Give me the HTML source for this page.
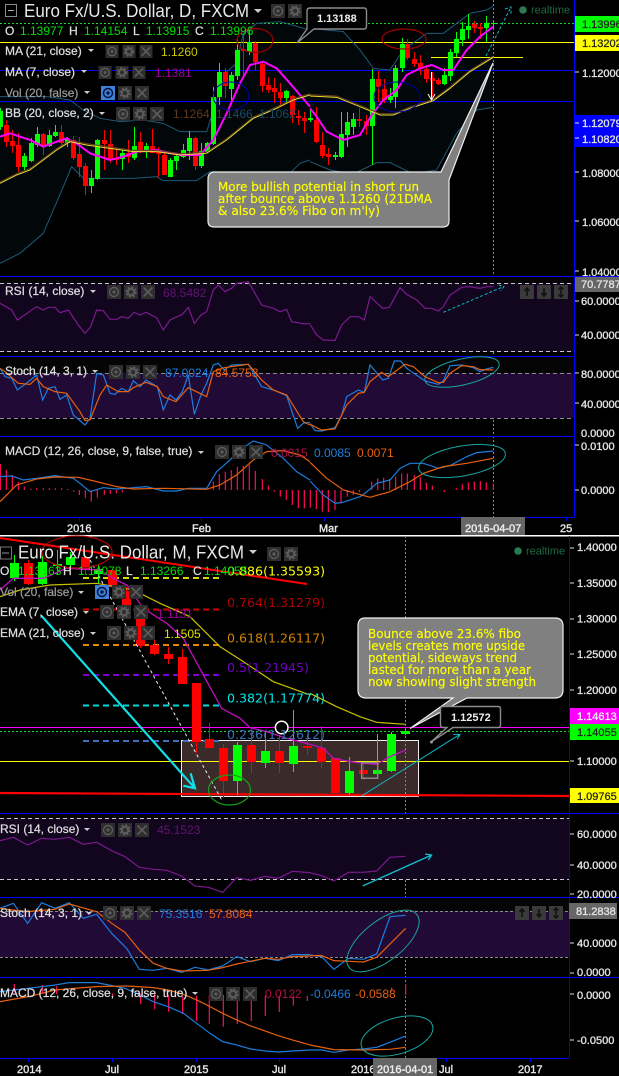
<!DOCTYPE html>
<html><head><meta charset="utf-8"><style>
html,body{margin:0;padding:0;background:#000;width:619px;height:1076px;overflow:hidden}
svg{display:block}
svg *{vector-effect:non-scaling-stroke}
text{font-family:"Liberation Sans",sans-serif;font-size:12px;fill:#ddd}
.t{font-size:18px;fill:#e8e8e8}
.ax{font-size:11px;fill:#e2e2e2;stroke:#e2e2e2;stroke-width:.35px}
.axd{font-size:11px;fill:#222;stroke:#222;stroke-width:.25px}
.tm{font-size:11px;fill:#e6e6e6;stroke:#e6e6e6;stroke-width:.4px}
.g{fill:#00e000}
.lb{fill:#dedede;font-size:12px;stroke:#dedede;stroke-width:.25px}
.c{font-family:"DejaVu Sans",sans-serif;fill:#ff0;font-size:12px;stroke:#ff0;stroke-width:.15px}
.f{font-family:"DejaVu Sans",sans-serif;font-size:12.5px}
.l{fill:none;stroke-width:1}
</style></head><body>
<svg width="619" height="1076" viewBox="0 0 619 1076" xmlns="http://www.w3.org/2000/svg">
<defs>
<symbol id="e" viewBox="0 0 14 14" overflow="visible"><rect width="14" height="14" fill="#2e2e2e"/><circle cx="7" cy="7" r="4.5" fill="none" stroke="#5c5c5c" stroke-width="1.4"/><circle cx="7" cy="7" r="1.6" fill="#5c5c5c"/></symbol>
<symbol id="b" viewBox="0 0 14 14" overflow="visible"><rect width="14" height="14" fill="#3f7fd8"/><circle cx="7" cy="7" r="4.5" fill="none" stroke="#013" stroke-width="1.4"/><circle cx="7" cy="7" r="1.6" fill="#013"/></symbol>
<symbol id="s" viewBox="0 0 14 14" overflow="visible"><rect width="14" height="14" fill="#2e2e2e"/><circle cx="7" cy="7" r="3.2" fill="none" stroke="#5c5c5c" stroke-width="2"/><circle cx="7" cy="7" r="4.8" fill="none" stroke="#5c5c5c" stroke-width="1.8" stroke-dasharray="2 1.8"/></symbol>
<symbol id="x" viewBox="0 0 14 14" overflow="visible"><rect width="14" height="14" fill="#2e2e2e"/><path d="M2.5 2.5L11.5 11.5M11.5 2.5L2.5 11.5" stroke="#5c5c5c" stroke-width="1.6"/></symbol>
<symbol id="u" viewBox="0 0 14 14" overflow="visible"><rect width="14" height="14" fill="#3a3a3a"/><path d="M7 3V11M4.5 6L7 3L9.5 6" stroke="#111" stroke-width="1.6" fill="none"/></symbol>
<symbol id="d" viewBox="0 0 14 14" overflow="visible"><rect width="14" height="14" fill="#3a3a3a"/><path d="M7 3V11M4.5 8L7 11L9.5 8" stroke="#111" stroke-width="1.6" fill="none"/></symbol>
<symbol id="ud" viewBox="0 0 14 14" overflow="visible"><rect width="14" height="14" fill="#3a3a3a"/><path d="M7 2V12M4.5 4.5L7 2L9.5 4.5M4.5 9.5L7 12L9.5 9.5" stroke="#111" stroke-width="1.5" fill="none"/></symbol>
</defs>
<rect width="619" height="1076" fill="#000"/>

<!-- ============ TOP CHART ============ -->
<g transform="scale(.3333)"><polygon fill="#02070a" points="0,290 140,290 210,300 250,330 300,355 360,365 430,360 490,370 540,395 620,395 650,300 680,215 710,190 730,100 770,70 840,65 930,90 930,480 900,490 850,540 780,560 700,520 630,515 590,542 490,542 470,530 400,535 300,535 250,535 215,500 190,560 130,700 60,760 0,790"/></g>
<g transform="translate(310,0) scale(.3333)"><polygon fill="#02070a" points="0,85 100,95 150,150 190,205 240,210 280,150 350,100 400,100 480,40 530,30 550,18 550,322 500,330 440,400 380,510 310,522 240,488 200,488 130,522 60,510 0,485"/></g>
<path d="M0 23.5H574" stroke="#1fd81f" stroke-dasharray="2 2" fill="none"/>
<path d="M0 42.5H574" stroke="#ff0" fill="none"/>
<path d="M0 70.5H574M0 101.5H574" stroke="#00f" fill="none"/>
<path d="M431 57.5H523" stroke="#ff0" fill="none"/>
<g transform="scale(.3333)"><polyline class="l" stroke="#1c5a78" points="0,290 140,290 210,300 250,330 300,355 360,365 430,360 490,370 540,395 620,395 650,300 680,215 710,190 730,100 770,70 840,65 930,90"/><polyline class="l" stroke="#1c5a78" points="0,790 60,760 130,700 190,560 215,500 250,535 300,535 400,535 470,530 490,542 590,542 630,515 700,520 780,560 850,540 900,490 930,480"/></g>
<g transform="translate(310,0) scale(.3333)"><polyline class="l" stroke="#1c5a78" points="0,85 100,95 150,150 190,205 240,210 280,150 350,100 400,100 480,40 530,30 550,18"/><polyline class="l" stroke="#1c5a78" points="0,485 60,510 130,522 200,488 240,488 310,522 380,510 440,400 500,330 550,322"/></g>
<path fill="none" stroke="#0f0" stroke-width="1" d="M0.5 108V130M24.5 153V170M31.5 138V162M37.5 127V147M49.5 130V147M55.5 125V137M67.5 137V147M91.5 170V193M97.5 139V180M122.5 150V170M134.5 127V160M146.5 143V158M170.5 158V177M176.5 153V170M183.5 144V158M189.5 131V160M201.5 143V168M207.5 142V153M213.5 87V145M219.5 63V105M231.5 72V102M237.5 38V80M249.5 29V55M286.5 90V103M310.5 110V122M335.5 152V160M341.5 112V158M347.5 112V147M353.5 113V135M372.5 69V165M390.5 88V103M395.5 65V108M402.5 38V72M444.5 68V85M450.5 49V81M456.5 32V57M462.5 22V46M468.5 14V39M486.5 16V42M493.5 20V28"/>
<path fill="none" stroke="#0f0" stroke-width="5" d="M0.5 111V127M24.5 156V167M31.5 143V161M37.5 134V145M49.5 135V146M55.5 132V136M67.5 139V143M91.5 178V186M97.5 140V179M122.5 153V159M134.5 146V158M146.5 146V151M170.5 160V177M176.5 156V161M183.5 150V157M189.5 138V151M201.5 151V166M207.5 143V152M213.5 97V144M219.5 72V97M231.5 75V89M237.5 50V76M249.5 42V52M286.5 91V98M310.5 118V120M335.5 155V157M341.5 134V157M347.5 122V135M353.5 119V127M372.5 79V126M390.5 96V100M395.5 68V97M402.5 44V68M444.5 75V84M450.5 52V76M456.5 39V53M462.5 29V40M468.5 26V30M486.5 23V28M493.5 23V24"/>
<path fill="none" stroke="#f00" stroke-width="1" d="M6.5 120V147M12.5 130V153M18.5 133V172M43.5 133V155M61.5 125V147M73.5 136V160M79.5 137V177M85.5 163V195M104.5 130V170M110.5 130V163M116.5 148V165M128.5 140V163M140.5 132V153M152.5 129V153M158.5 147V177M164.5 153V175M195.5 137V170M225.5 68V98M243.5 35V77M255.5 41V70M262.5 62V92M268.5 77V93M274.5 78V103M280.5 83V107M292.5 95V123M298.5 110V125M304.5 112V133M316.5 107V143M322.5 132V158M328.5 148V165M359.5 108V127M366.5 115V135M378.5 71V102M384.5 79V103M407.5 39V60M414.5 52V67M420.5 55V75M426.5 65V83M432.5 72V97M438.5 78V85M474.5 21V33M480.5 23V39"/>
<path fill="none" stroke="#f00" stroke-width="5" d="M6.5 125V142M12.5 141V146M18.5 145V167M43.5 134V146M61.5 132V143M73.5 140V158M79.5 154V167M85.5 166V186M104.5 140V144M110.5 144V159M116.5 158V160M128.5 153V157M140.5 142V151M152.5 146V153M158.5 152V154M164.5 155V175M195.5 138V166M225.5 72V86M243.5 49V51M255.5 43V62M262.5 64V86M268.5 85V90M274.5 88V92M280.5 92V98M292.5 96V115M298.5 116V118M304.5 118V121M316.5 120V142M322.5 145V156M328.5 154V157M359.5 119V121M366.5 121V126M378.5 79V87M384.5 89V100M407.5 44V58M414.5 59V64M420.5 63V69M426.5 69V79M432.5 78V81M438.5 80V84M474.5 24V28M480.5 27V29"/>
<g transform="scale(.3333)"><polyline class="l" stroke="#f0f" style="stroke-width:2" points="0,410 30,400 60,410 90,420 130,440 170,425 200,415 230,430 270,460 330,480 370,470 410,455 470,450 540,465 600,465 640,420 680,340 720,250 750,195 790,185 830,205 870,250 930,320"/><polyline class="l" stroke="#6a4020" style="stroke-width:1" points="0,546 50,521 90,506 130,476 170,446 210,421 260,431 330,441 400,451 470,451 540,461 620,456 680,416 760,351 830,321 880,296 930,281"/><polyline class="l" stroke="#e8e030" style="stroke-width:1" points="0,550 50,525 90,510 130,480 170,450 210,425 260,435 330,445 400,455 470,455 540,465 620,460 680,420 760,355 830,325 880,300 930,285"/></g>
<g transform="translate(310,0) scale(.3333)"><polyline class="l" stroke="#f0f" style="stroke-width:2" points="0,325 20,350 50,395 100,420 150,405 185,345 220,300 260,270 290,225 330,205 365,195 400,210 430,210 470,150 510,110 550,80"/><polyline class="l" stroke="#6a4020" style="stroke-width:1" points="0,284 80,288 150,316 210,341 250,341 300,321 370,298 420,261 480,211 550,168"/><polyline class="l" stroke="#e8e030" style="stroke-width:1" points="0,288 80,292 150,320 210,345 250,345 300,325 370,302 420,265 480,215 550,172"/></g>
<ellipse cx="255" cy="40.5" rx="18" ry="12" fill="none" stroke="#a00000" stroke-width="1.2"/>
<ellipse cx="404" cy="39" rx="22" ry="10" fill="none" stroke="#a00000" stroke-width="1.2"/>
<ellipse cx="231" cy="96" rx="18" ry="14" fill="none" stroke="#0000a8"/>
<ellipse cx="397" cy="97" rx="23" ry="15" fill="none" stroke="#0000a8"/>
<path d="M431.5 72V99M428 94L431.5 100L435 94" fill="none" stroke="#fff"/>
<path d="M486 56L510 9M505 9L511 7L511 14" fill="none" stroke="#12b6c4" stroke-dasharray="3 2"/>
<path d="M493.5 0V517" stroke="#888" stroke-dasharray="2 2" fill="none"/>
<path d="M215 172H441L493 63L449 180V221Q449 227 443 227H214Q208 227 208 221V179Q208 172 215 172Z" fill="#808080" stroke="#eee" stroke-width="1.2"/>
<text class="c" x="218" y="191" textLength="201" lengthAdjust="spacingAndGlyphs">More bullish potential in short run</text>
<text class="c" x="218" y="203" textLength="214" lengthAdjust="spacingAndGlyphs">after bounce above 1.1260 (21DMA</text>
<text class="c" x="218" y="215" textLength="162" lengthAdjust="spacingAndGlyphs">&amp; also 23.6% Fibo on m'ly)</text>
<path d="M310 8H364Q366.5 8 366.5 11V26Q366.5 29 364 29H314L297 43L307 29V11Q307 8 310 8Z" fill="#000" stroke="#8a8a8a" stroke-width="1.4"/>
<text x="317" y="22" style="font-size:11px;font-weight:bold;fill:#eee">1.13188</text>
<circle cx="523" cy="10" r="3.8" fill="#2a7a50"/>
<text x="531" y="13.5" style="font-size:11px;fill:#1d6a45">realtime</text>
<rect x="5.5" y="4.5" width="11" height="12" fill="none" stroke="#888"/><path d="M8 10.5H14" stroke="#aaa"/>
<text class="t" x="24" y="17" textLength="225" lengthAdjust="spacingAndGlyphs">Euro Fx/U.S. Dollar, D, FXCM</text>
<polygon points="254,9 262,9 258,13" fill="#ccc"/>
<use href="#e" x="271" y="4" width="14" height="14"/><use href="#s" x="288" y="4" width="14" height="14"/>
<text class="lb" x="5" y="35">O</text><text class="g" x="20" y="35">1.13977</text><text class="lb" x="69" y="35">H</text><text class="g" x="84" y="35">1.14154</text><text class="lb" x="133" y="35">L</text><text class="g" x="146" y="35">1.13915</text><text class="lb" x="195" y="35">C</text><text class="g" x="210" y="35">1.13996</text>
<text class="lb" x="5" y="55">MA (21, close)</text><polygon points="88,49 94,49 91,52" fill="#ccc"/>
<use href="#e" x="105" y="45" width="14" height="13"/><use href="#s" x="122" y="45" width="14" height="13"/><use href="#x" x="139" y="45" width="14" height="13"/>
<text x="161" y="56" style="fill:#cccc00">1.1260</text>
<text class="lb" x="5" y="76">MA (7, close)</text><polygon points="81,70 87,70 84,73" fill="#ccc"/>
<use href="#e" x="98" y="66" width="14" height="13"/><use href="#s" x="115" y="66" width="14" height="13"/><use href="#x" x="132" y="66" width="14" height="13"/>
<text x="155" y="77" style="fill:#9a009a">1.1381</text>
<text class="lb" x="5" y="97" style="fill:#999;stroke:#999">Vol (20, false)</text><polygon points="84,91 90,91 87,94" fill="#ccc"/>
<use href="#b" x="101" y="86" width="14" height="14"/><use href="#s" x="118" y="86" width="14" height="14"/><use href="#x" x="135" y="86" width="14" height="14"/>
<text class="lb" x="5" y="117">BB (20, close, 2)</text><polygon points="99,112 105,112 102,115" fill="#ccc"/>
<use href="#e" x="116" y="107" width="14" height="14"/><use href="#s" x="133" y="107" width="14" height="14"/><use href="#x" x="150" y="107" width="14" height="14"/>
<text x="173" y="118" style="fill:#5e3a1e">1.1264</text><text x="216" y="118" style="fill:#1c4a62">1.1466</text><text x="259" y="118" style="fill:#1c4a62">1.1062</text>

<path d="M574.5 0V517.5M0 276.5H619M0 356.5H574M0 436.5H574M0 517.5H574" stroke="#00f" fill="none"/>
<rect x="575" y="16" width="44" height="16" fill="#0f0"/><text class="axd" x="582" y="28">1.13996</text>
<rect x="575" y="35" width="44" height="16" fill="#ff0"/><text class="axd" x="582" y="47">1.13202</text>
<rect x="575" y="115" width="44" height="32" fill="#00f"/>
<text class="ax" x="582" y="127">1.12079</text><text class="ax" x="582" y="143">1.10820</text>
<path d="M575 72H579M575 123H579M575 138H579M575 172H579M575 221H579M575 271H579M575 301H579M575 335H579M575 373H579M575 403H579M575 445H579M575 490H579" stroke="#dde"/>
<text class="ax" x="582" y="77">1.12000</text><text class="ax" x="582" y="177">1.08000</text><text class="ax" x="582" y="226">1.06000</text><text class="ax" x="582" y="276">1.04000</text>

<rect x="0" y="283" width="574" height="69" fill="#12051e"/>
<rect x="0" y="277" width="574" height="6" fill="#050507"/>
<path d="M0 283.5H574M0 351.5H574" stroke="#c8c8c8" stroke-dasharray="4 3" fill="none"/>
<g transform="translate(0,275) scale(.3333)"><polyline class="l" stroke="#7a1a8e" style="stroke-width:1.2" points="0,85 35,105 52,135 110,95 130,105 145,97 165,97 180,113 205,105 235,150 255,175 272,155 290,105 310,107 330,133 350,133 365,125 385,130 402,112 420,120 438,112 470,128 490,165 510,135 547,118 565,97 583,145 603,120 620,110 640,45 655,30 675,50 695,40 710,25 745,20 785,90 820,100 840,110 860,103 875,140 915,147 930,145"/></g>
<g transform="translate(310,275) scale(.3333)"><polyline class="l" stroke="#7a1a8e" style="stroke-width:1.2" points="0,148 20,180 40,195 75,196 95,150 120,125 145,125 163,135 180,65 218,100 238,97 270,38 290,58 320,75 345,100 365,100 385,108 400,95 420,60 455,37 480,35 510,40 530,35 550,35"/><path d="M400 112L580 35M566 30L582 35L572 47" fill="none" stroke="#12b6c4" stroke-dasharray="3 2"/></g>
<text class="lb" x="5" y="295">RSI (14, close)</text><polygon points="90,290 96,290 93,293" fill="#ccc"/>
<use href="#e" x="107" y="285" width="14" height="14"/><use href="#s" x="124" y="285" width="14" height="14"/><use href="#x" x="141" y="285" width="14" height="14"/>
<text x="163" y="297" style="fill:#60146e">68.5482</text>
<use href="#u" x="520" y="285" width="14" height="14"/><use href="#d" x="537" y="285" width="14" height="14"/><use href="#ud" x="554" y="285" width="14" height="14"/>
<rect x="575" y="277" width="44" height="15" fill="#666"/><text class="ax" x="581" y="288">70.7787</text>
<text class="ax" x="581" y="305">60.0000</text><text class="ax" x="581" y="339">40.0000</text>

<rect x="0" y="373" width="574" height="45" fill="#210a36"/>
<rect x="0" y="357" width="574" height="16" fill="#050505"/>
<path d="M0 373.5H574M0 418.5H574" stroke="#8a8a8a" stroke-dasharray="4 3" fill="none"/>
<g transform="translate(0,275) scale(.3333)"><polyline class="l" stroke="#1a7ee0" style="stroke-width:1.2" points="0,280 15,305 35,310 52,345 75,328 110,300 128,375 145,340 165,335 180,373 200,360 220,420 255,450 270,430 290,295 310,300 330,355 345,358 365,340 385,350 400,317 420,335 438,315 472,335 490,405 510,360 528,375 547,350 565,300 583,418 603,360 620,325 640,270 655,265 672,285 695,270 745,268 785,335 820,345 860,362 893,460 910,445 930,442"/><polyline class="l" stroke="#e8600c" style="stroke-width:1.2" points="0,280 15,290 55,325 90,328 110,310 130,335 165,350 200,355 240,410 255,437 270,435 300,360 320,330 355,350 385,350 400,338 438,322 472,335 490,365 528,380 565,338 620,365 640,290 672,278 745,268 785,315 820,345 860,360 910,440 930,450"/></g>
<g transform="translate(310,275) scale(.3333)"><polyline class="l" stroke="#1a7ee0" style="stroke-width:1.2" points="0,445 15,467 35,468 75,458 95,420 110,365 145,345 163,352 180,270 218,315 235,310 253,258 272,258 290,280 345,318 385,328 400,318 420,272 455,270 490,278 510,290 530,282 550,277"/><polyline class="l" stroke="#e8600c" style="stroke-width:1.2" points="0,448 35,465 75,462 110,390 145,355 163,352 180,320 215,292 235,305 285,268 310,275 345,305 385,323 400,322 420,295 455,272 490,275 510,284 550,285"/></g>
<ellipse cx="462" cy="372" rx="38" ry="13" transform="rotate(-13 462 372)" fill="none" stroke="#19a5a0"/>
<text class="lb" x="5" y="375">Stoch (14, 3, 1)</text><polygon points="92,370 98,370 95,373" fill="#ccc"/>
<use href="#e" x="109" y="365" width="14" height="14"/><use href="#s" x="126" y="365" width="14" height="14"/><use href="#x" x="143" y="365" width="14" height="14"/>
<text x="165" y="377" style="fill:#1a7ee0">87.0024</text><text x="215" y="377" style="fill:#e8600c">84.5753</text>
<text class="ax" x="581" y="378">80.0000</text><text class="ax" x="581" y="408">40.0000</text><text class="ax" x="581" y="437">0.0000</text>

<g transform="translate(0,275) scale(.3333)"><path fill="none" stroke="#ff0a60" style="stroke-width:1.2" d="M1 567V645M19 585V645M37 600V645M55 620V645M73 635V645M93 641V645M110 640V645M130 640V645M148 640V645M166 640V645M185 640V645M203 642V645M221 645V650M238 645V660M256 645V670M274 645V680M292 645V668M313 645V660M331 645V657M349 645V655M367 645V652M640 620V645M658 597V645M676 590V645M694 585V645M712 575V645M730 573V645M748 570V645M766 588V645M787 612V645M805 632V645M823 645V650M841 645V665M859 645V675M877 645V690M895 645V700M913 645V700"/><polyline class="l" stroke="#1a7ee0" style="stroke-width:1.2" points="0,605 35,603 70,615 110,610 165,602 220,610 240,625 270,650 310,638 350,642 440,635 490,648 530,648 565,640 620,640 650,590 690,555 720,525 760,498 800,510 850,550 890,590 930,615"/><polyline class="l" stroke="#e8600c" style="stroke-width:1.2" points="0,680 50,630 110,612 165,606 235,607 290,620 350,635 400,642 490,640 620,643 660,630 710,600 760,555 800,530 850,527 900,540 930,560"/></g>
<g transform="translate(310,275) scale(.3333)"><path fill="none" stroke="#ff0a60" style="stroke-width:1.2" d="M1 645V698M19 645V703M37 645V710M55 645V712M75 645V705M93 645V685M112 645V665M130 645V660M148 645V652M185 645V620M203 645V610M221 645V608M239 645V612M257 645V605M275 645V595M292 645V595M313 645V600M331 645V607M349 645V623M367 645V632M403 645V651M439 645V640M457 645V628M475 645V622M493 645V620M511 645V618M529 645V622M550 645V625"/><polyline class="l" stroke="#1a7ee0" style="stroke-width:1.2" points="0,618 40,660 75,685 95,683 150,665 165,655 200,625 240,615 270,580 300,565 340,565 385,580 420,572 470,545 500,533 550,528"/><polyline class="l" stroke="#e8600c" style="stroke-width:1.2" points="0,562 50,610 100,645 180,667 240,650 300,620 340,595 400,575 470,565 550,550"/></g>
<ellipse cx="462" cy="461" rx="44" ry="15" transform="rotate(-10 462 461)" fill="none" stroke="#19a5a0"/>
<text class="lb" x="5" y="455">MACD (12, 26, close, 9, false, true)</text><polygon points="198,451 204,451 201,454" fill="#ccc"/>
<use href="#e" x="215" y="445" width="14" height="14"/><use href="#s" x="232" y="445" width="14" height="14"/><use href="#x" x="249" y="445" width="14" height="14"/>
<text x="271" y="457" style="fill:#b01048">0.0015</text><text x="314" y="457" style="fill:#1a7ee0">0.0085</text><text x="357" y="457" style="fill:#e8600c">0.0071</text>
<text class="ax" x="581" y="450">0.0100</text><text class="ax" x="581" y="494">0.0000</text>

<path d="M79.5 517V521M201.5 517V521M324.5 517V521M566.5 517V521" stroke="#00f"/>
<text class="tm" x="67" y="532">2016</text>
<text class="tm" x="192" y="532">Feb</text>
<text class="tm" x="319" y="532">Mar</text>
<text class="tm" x="560" y="532">25</text>
<rect x="461" y="517" width="64" height="18" fill="#666"/>
<text class="tm" x="465" y="532" style="fill:#eee;stroke:#eee">2016-04-07</text>
<rect x="0" y="535" width="619" height="1.5" fill="#fff"/>

<!-- ============ BOTTOM CHART ============ -->
<path d="M0 727.5H569" stroke="#f0f" fill="none"/>
<path d="M0 731.5H569" stroke="#1fd81f" stroke-dasharray="2 2" fill="none"/>
<rect x="181.5" y="740.5" width="237" height="56" fill="#3a2a2a" stroke="#eee" stroke-width="1"/>
<path d="M0 761.5H569" stroke="#ff0" fill="none"/>
<path d="M0 793L569 796" stroke="#f00" stroke-width="2.2" fill="none"/>
<path d="M0 538L307 584" stroke="#f00" stroke-width="2" fill="none"/>
<g fill="none" stroke-width="2" stroke-dasharray="6 4">
<path d="M83 578H220" stroke="#d8d800"/><path d="M83 609.5H220" stroke="#d00000"/><path d="M83 645H220" stroke="#e08800"/><path d="M83 675H220" stroke="#8000d0"/><path d="M83 705.5H220" stroke="#00d8d8"/><path d="M83 741H220" stroke="#4070c0"/>
</g>
<path fill="none" stroke="#0f0" d="M14.5 555V581M42.5 555V585M57.5 550V575M70.5 552V570M98.5 565V583M237.5 742V795M265.5 732V768M293.5 710V772M349.5 757V795M377.5 734V778M391.5 732V772M405.5 730V735"/>
<path fill="none" stroke="#0f0" stroke-width="9" d="M14.5 563V578M42.5 562V584M57.5 564V566M70.5 557V565M98.5 569V574M237.5 745V781M265.5 751V763M293.5 746V764M349.5 771V793M377.5 770V774M391.5 734V771M405.5 731V734"/>
<path fill="none" stroke="#f00" d="M28.5 560V585M85.5 557V575M112.5 569V590M126.5 587V615M140.5 609V648M154.5 635V655M168.5 647V664M182.5 649V684M196.5 683V753M209.5 723V748M223.5 744V798M251.5 728V773M279.5 735V773M307.5 735V755M321.5 726V768M335.5 758V793M363.5 763V780"/>
<path fill="none" stroke="#f00" stroke-width="9" d="M28.5 563V584M85.5 557V570M112.5 570V587M126.5 591V610M140.5 609V646M154.5 645V654M168.5 654V659M182.5 657V684M196.5 683V742M209.5 739V748M223.5 748V781M251.5 745V762M279.5 751V763M307.5 746V748M321.5 748V762M335.5 758V793M363.5 770V774"/>
<g transform="translate(0,535) scale(.3333)"><polyline class="l" stroke="#c010c0" style="stroke-width:1.3" points="0,165 40,130 130,130 200,100 300,105 340,130 380,150 430,220 500,265 550,310 610,420 665,520 720,550 750,578 800,590 860,610 930,628"/><polyline class="l" stroke="#c8c000" style="stroke-width:1.2" points="0,185 60,165 150,150 290,145 400,165 480,205 570,245 660,335 730,380 820,440 930,480"/><polyline class="l" stroke="#eee" stroke-dasharray="3 3" points="270,75 668,800"/><path d="M125 243L585 760M550 752L585 760L572 715" fill="none" stroke="#10e0e8" style="stroke-width:2.2"/></g>
<g transform="translate(310,535) scale(.3333)"><polyline class="l" stroke="#c010c0" style="stroke-width:1.3" points="0,628 40,640 70,670 110,678 160,685 200,688 240,665 287,645"/><polyline class="l" stroke="#c8c000" style="stroke-width:1.2" points="0,475 80,515 150,545 200,562 287,568"/><path d="M155 683H203V730H155Z" fill="none" stroke="#888" style="stroke-width:1.5"/><path d="M155 783L450 598M430 598L450 598L442 612" fill="none" stroke="#12b6c4"/></g>
<ellipse cx="77" cy="552" rx="35" ry="16" fill="none" stroke="#b00000" stroke-width="1.2"/>
<ellipse cx="229.5" cy="790" rx="21" ry="15" fill="none" stroke="#15a015" stroke-width="1.2"/>
<circle cx="281.7" cy="727.5" r="6.3" fill="#000" stroke="#fff" stroke-width="1.5"/>
<path d="M405.5 536V1058" stroke="#888" stroke-dasharray="2 2" fill="none"/>
<text class="f" x="227" y="575.5" style="fill:#ff0" textLength="98" lengthAdjust="spacingAndGlyphs">0.886(1.35593)</text>
<text class="f" x="227" y="607" style="fill:#b00000" textLength="98" lengthAdjust="spacingAndGlyphs">0.764(1.31279)</text>
<text class="f" x="227" y="642.5" style="fill:#d08000" textLength="98" lengthAdjust="spacingAndGlyphs">0.618(1.26117)</text>
<text class="f" x="227" y="672" style="fill:#7000c8" textLength="82" lengthAdjust="spacingAndGlyphs">0.5(1.21945)</text>
<text class="f" x="227" y="702.5" style="fill:#00e8e8" textLength="98" lengthAdjust="spacingAndGlyphs">0.382(1.17774)</text>
<text class="f" x="227" y="739" style="fill:#3a6fb8" textLength="98" lengthAdjust="spacingAndGlyphs">0.236(1.12612)</text>
<path d="M365 618H555Q563 618 563 626V690Q563 698 555 698H467L410 728.5L453 698H366Q358 698 358 690V626Q358 618 365 618Z" fill="#808080" stroke="#eee" stroke-width="1.2"/>
<text class="c" x="368" y="638" textLength="153" lengthAdjust="spacingAndGlyphs">Bounce above 23.6% fibo</text>
<text class="c" x="368" y="650" textLength="157" lengthAdjust="spacingAndGlyphs">levels creates more upside</text>
<text class="c" x="368" y="662" textLength="149" lengthAdjust="spacingAndGlyphs">potential, sideways trend</text>
<text class="c" x="368" y="674" textLength="163" lengthAdjust="spacingAndGlyphs">lasted for more than a year</text>
<text class="c" x="368" y="686" textLength="168" lengthAdjust="spacingAndGlyphs">now showing slight strength</text>
<path d="M443 706.5H498Q500.5 706.5 500.5 709V725Q500.5 727.5 498 727.5H453L431 742L447 727.5H443Q440.5 727.5 440.5 725V709Q440.5 706.5 443 706.5Z" fill="#000" stroke="#8a8a8a" stroke-width="1.4"/>
<text x="451" y="721" style="font-size:11px;font-weight:bold;fill:#eee">1.12572</text>
<circle cx="431.5" cy="742" r="1.5" fill="#999"/>
<circle cx="518" cy="551" r="3.8" fill="#2a7a50"/>
<text x="526" y="554.5" style="font-size:11px;fill:#1d6a45">realtime</text>
<rect x="0.5" y="547" width="11" height="12" fill="none" stroke="#777"/><path d="M2 553H9" stroke="#999"/>
<text class="t" x="18" y="558.5" textLength="226" lengthAdjust="spacingAndGlyphs">Euro Fx/U.S. Dollar, M, FXCM</text>
<polygon points="249,550 257,550 253,554" fill="#ccc"/>
<use href="#e" x="267" y="547" width="14" height="14"/><use href="#s" x="284" y="547" width="14" height="14"/>
<text class="lb" x="0" y="575">O</text><text class="g" x="18" y="575">1.13163</text><text class="lb" x="63" y="575">H</text><text class="g" x="78" y="575">1.14078</text><text class="lb" x="126" y="575">L</text><text class="g" x="140" y="575">1.13266</text><text class="lb" x="193" y="575">C</text><text class="g" x="204" y="575">1.14055</text>
<text class="lb" x="0" y="596" style="fill:#999;stroke:#999">Vol (20, false)</text><polygon points="78,591 84,591 81,594" fill="#ccc"/>
<use href="#b" x="95" y="585" width="14" height="14"/><use href="#s" x="112" y="585" width="14" height="14"/><use href="#x" x="129" y="585" width="14" height="14"/>
<text class="lb" x="0" y="616">EMA (7, close)</text><polygon points="83,611 89,611 86,614" fill="#ccc"/>
<use href="#e" x="100" y="605" width="14" height="14"/><use href="#s" x="117" y="605" width="14" height="14"/><use href="#x" x="134" y="605" width="14" height="14"/>
<text x="157" y="618" style="fill:#9a009a">1.1131</text>
<text class="lb" x="0" y="637">EMA (21, close)</text><polygon points="90,632 96,632 93,635" fill="#ccc"/>
<use href="#e" x="107" y="626" width="14" height="14"/><use href="#s" x="124" y="626" width="14" height="14"/><use href="#x" x="141" y="626" width="14" height="14"/>
<text x="164" y="638" style="fill:#e0e000">1.1505</text>
<path d="M569.5 536V1058.5M0 813.5H619M0 897.5H619M0 977.5H619M0 1058.5H569" stroke="#00f" fill="none"/>
<path d="M570 548H574M570 583H574M570 619H574M570 654H574M570 690H574M570 761H574M570 834H574M570 865H574M570 894H574M570 943H574M570 973H574M570 994H574M570 1040H574" stroke="#dde"/>
<text class="ax" x="577" y="551">1.40000</text><text class="ax" x="577" y="587">1.35000</text><text class="ax" x="577" y="622.5">1.30000</text><text class="ax" x="577" y="658">1.25000</text><text class="ax" x="577" y="694">1.20000</text><text class="ax" x="577" y="765">1.10000</text>
<rect x="570" y="708" width="49" height="16" fill="#f0f"/><text class="ax" x="577" y="720" style="fill:#eee;stroke:#eee">1.14613</text>
<rect x="570" y="724" width="49" height="16" fill="#0f0"/><text class="axd" x="577" y="736">1.14055</text>
<rect x="570" y="788" width="49" height="15" fill="#ff0"/><text class="axd" x="577" y="800">1.09765</text>

<rect x="0" y="818" width="569" height="62" fill="#12051e"/>
<rect x="0" y="814" width="569" height="4" fill="#050507"/>
<path d="M0 818.5H569M0 879.5H569" stroke="#c8c8c8" stroke-dasharray="4 3" fill="none"/>
<g transform="translate(0,810) scale(.3333)"><polyline class="l" stroke="#7a1a8e" style="stroke-width:1.2" points="0,92 40,82 83,105 125,85 165,88 208,82 250,103 290,97 335,122 375,140 418,172 460,178 500,181 545,198 585,228 625,232 668,247 710,203 752,211 795,199 835,205 877,184 930,188"/></g>
<g transform="translate(310,810) scale(.3333)"><polyline class="l" stroke="#7a1a8e" style="stroke-width:1.2" points="0,188 35,197 72,213 115,187 160,187 200,183 240,142 287,139"/><path d="M158 228L365 135M345 132L365 135L355 150" fill="none" stroke="#12c0d0" style="stroke-width:1.3"/></g>
<text class="lb" x="0" y="833">RSI (14, close)</text><polygon points="84,828 90,828 87,831" fill="#ccc"/>
<use href="#e" x="101" y="823" width="14" height="14"/><use href="#s" x="118" y="823" width="14" height="14"/><use href="#x" x="135" y="823" width="14" height="14"/>
<text x="157" y="834" style="fill:#60146e">45.1523</text>
<text class="ax" x="577" y="838">60.0000</text><text class="ax" x="577" y="869">40.0000</text><text class="ax" x="577" y="898">20.0000</text>

<rect x="0" y="911" width="569" height="46" fill="#210a36"/>
<rect x="0" y="898" width="569" height="13" fill="#050505"/>
<path d="M0 911.5H569M0 957.5H569" stroke="#8a8a8a" stroke-dasharray="3 2" fill="none"/>
<g transform="translate(0,810) scale(.3333)"><polyline class="l" stroke="#1a7ee0" style="stroke-width:1.2" points="0,295 40,280 83,340 125,278 165,295 208,278 250,325 290,313 335,370 380,415 418,478 460,481 500,475 545,487 585,472 625,480 668,468 710,440 752,455 795,445 835,452 877,434 930,434"/><polyline class="l" stroke="#e8600c" style="stroke-width:1.2" points="0,295 80,305 165,298 208,282 290,305 335,340 375,367 418,420 460,460 500,475 545,483 625,481 668,473 710,462 795,445 835,448 877,440 930,438"/></g>
<g transform="translate(310,810) scale(.3333)"><polyline class="l" stroke="#1a7ee0" style="stroke-width:1.2" points="0,435 35,440 72,478 115,445 160,448 200,432 240,320 287,316"/><polyline class="l" stroke="#e8600c" style="stroke-width:1.2" points="0,437 35,437 72,452 115,454 160,456 200,442 287,355"/></g>
<ellipse cx="383" cy="941" rx="43" ry="20" transform="rotate(-38 383 941)" fill="none" stroke="#19a5a0"/>
<text class="lb" x="0" y="917">Stoch (14, 3, 1)</text><polygon points="86,912 92,912 89,915" fill="#ccc"/>
<use href="#e" x="103" y="906" width="14" height="14"/><use href="#s" x="120" y="906" width="14" height="14"/><use href="#x" x="137" y="906" width="14" height="14"/>
<text x="159" y="918" style="fill:#1a7ee0">75.3516</text><text x="209" y="918" style="fill:#e8600c">57.8084</text>
<use href="#u" x="515" y="906" width="14" height="14"/><use href="#d" x="532" y="906" width="14" height="14"/><use href="#ud" x="549" y="906" width="14" height="14"/>
<rect x="569" y="903" width="48" height="16" fill="#666"/><text class="ax" x="576" y="915">81.2838</text>
<text class="ax" x="577" y="947">40.0000</text><text class="ax" x="577" y="976">0.0000</text>

<g transform="translate(0,810) scale(.3333)"><path fill="none" stroke="#ff0a60" style="stroke-width:1.2" d="M43 522V548M127 525V552M170 528V552M338 550V556M422 550V582M464 550V598M506 555V605M548 560V612M590 557V633M628 555V642M670 555V650M712 557V642M754 557V633M796 557V618M838 557V606M880 557V587M922 557V573"/><polyline class="l" stroke="#1a7ee0" style="stroke-width:1.2" points="0,545 85,535 165,525 208,518 290,518 335,527 375,535 420,555 460,575 505,590 550,610 590,640 630,670 668,695 710,705 752,717 795,723 835,726 877,723 930,720"/><polyline class="l" stroke="#e8600c" style="stroke-width:1.2" points="0,575 85,560 165,540 250,533 290,530 380,528 460,533 505,540 550,553 590,570 630,590 668,610 710,630 752,648 795,663 835,677 877,690 930,705"/></g>
<g transform="translate(310,810) scale(.3333)"><path fill="none" stroke="#ff0a60" style="stroke-width:1.2" d="M245 532V545M287 522V555"/><polyline class="l" stroke="#1a7ee0" style="stroke-width:1.2" points="0,720 35,720 72,727 115,720 160,717 200,712 240,697 287,678"/><polyline class="l" stroke="#e8600c" style="stroke-width:1.2" points="0,705 72,719 160,720 240,718 287,712"/></g>
<ellipse cx="397" cy="1036" rx="37" ry="18" transform="rotate(-16 397 1036)" fill="none" stroke="#19a5a0"/>
<text class="lb" x="0" y="997">MACD (12, 26, close, 9, false, true)</text><polygon points="192,992 198,992 195,995" fill="#ccc"/>
<use href="#e" x="209" y="987" width="14" height="14"/><use href="#s" x="226" y="987" width="14" height="14"/><use href="#x" x="243" y="987" width="14" height="14"/>
<text x="265" y="998" style="fill:#b01048">0.0122</text><text x="310" y="998" style="fill:#1a7ee0">-0.0466</text><text x="355" y="998" style="fill:#e8600c">-0.0588</text>
<text class="ax" x="577" y="999">0.0000</text><text class="ax" x="577" y="1044">-0.0500</text>

<path d="M28.5 1058V1062M112.5 1058V1062M196.5 1058V1062M279.5 1058V1062M363.5 1058V1062M446.5 1058V1062M530.5 1058V1062" stroke="#00f"/>
<text class="tm" x="17" y="1073">2014</text>
<text class="tm" x="105" y="1073">Jul</text>
<text class="tm" x="184" y="1073">2015</text>
<text class="tm" x="272" y="1073">Jul</text>
<text class="tm" x="351" y="1073">2016</text>
<rect x="373" y="1058" width="64" height="18" fill="#666"/>
<text class="tm" x="377" y="1073" style="fill:#eee;stroke:#eee">2016-04-01</text>
<text class="tm" x="439" y="1073">Jul</text>
<text class="tm" x="518" y="1073">2017</text>
</svg>
</body></html>
